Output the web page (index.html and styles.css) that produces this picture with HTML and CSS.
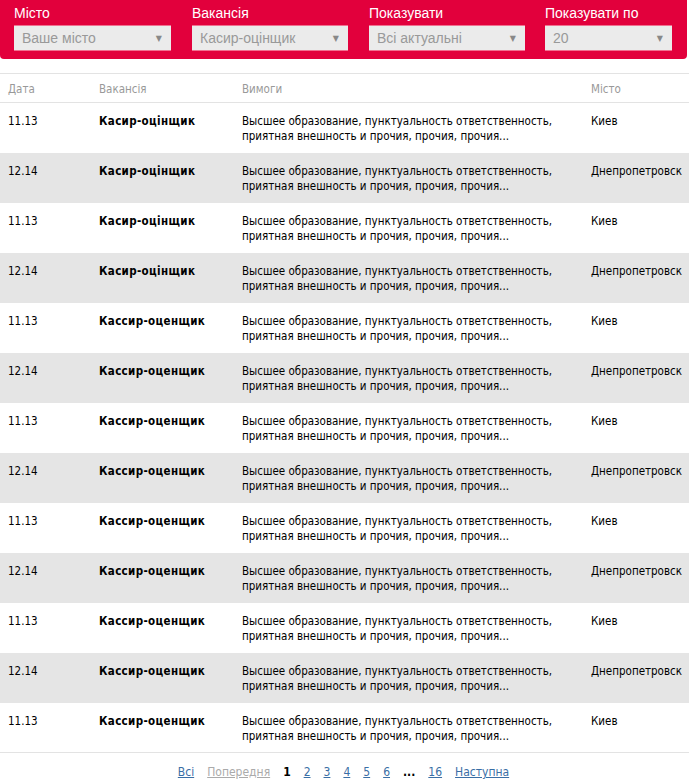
FILE: index.html
```html
<!DOCTYPE html>
<html lang="uk">
<head>
<meta charset="utf-8">
<link rel="stylesheet" href="styles.css">
</head>
<body>
<div class="filters">
  <div class="filter f1"><div class="label">Місто</div><div class="select"><span>Ваше місто</span><span class="arrow">▼</span></div></div>
  <div class="filter f2"><div class="label">Вакансія</div><div class="select"><span>Касир-оцінщик</span><span class="arrow">▼</span></div></div>
  <div class="filter f3"><div class="label">Показувати</div><div class="select"><span>Всі актуальні</span><span class="arrow">▼</span></div></div>
  <div class="filter f4"><div class="label">Показувати по</div><div class="select"><span>20</span><span class="arrow">▼</span></div></div>
</div>
<table class="jobs">
  <thead>
    <tr><th class="c-date">Дата</th><th class="c-vac">Вакансія</th><th class="c-req">Вимоги</th><th class="c-city">Місто</th></tr>
  </thead>
  <tbody>
    <tr><td>11.13</td><td class="vac">Касир-оцінщик</td><td>Высшее образование, пунктуальность ответственность,<br>приятная внешность и прочия, прочия, прочия...</td><td>Киев</td></tr>
    <tr class="alt"><td>12.14</td><td class="vac">Касир-оцінщик</td><td>Высшее образование, пунктуальность ответственность,<br>приятная внешность и прочия, прочия, прочия...</td><td>Днепропетровск</td></tr>
    <tr><td>11.13</td><td class="vac">Касир-оцінщик</td><td>Высшее образование, пунктуальность ответственность,<br>приятная внешность и прочия, прочия, прочия...</td><td>Киев</td></tr>
    <tr class="alt"><td>12.14</td><td class="vac">Касир-оцінщик</td><td>Высшее образование, пунктуальность ответственность,<br>приятная внешность и прочия, прочия, прочия...</td><td>Днепропетровск</td></tr>
    <tr><td>11.13</td><td class="vac">Кассир-оценщик</td><td>Высшее образование, пунктуальность ответственность,<br>приятная внешность и прочия, прочия, прочия...</td><td>Киев</td></tr>
    <tr class="alt"><td>12.14</td><td class="vac">Кассир-оценщик</td><td>Высшее образование, пунктуальность ответственность,<br>приятная внешность и прочия, прочия, прочия...</td><td>Днепропетровск</td></tr>
    <tr><td>11.13</td><td class="vac">Кассир-оценщик</td><td>Высшее образование, пунктуальность ответственность,<br>приятная внешность и прочия, прочия, прочия...</td><td>Киев</td></tr>
    <tr class="alt"><td>12.14</td><td class="vac">Кассир-оценщик</td><td>Высшее образование, пунктуальность ответственность,<br>приятная внешность и прочия, прочия, прочия...</td><td>Днепропетровск</td></tr>
    <tr><td>11.13</td><td class="vac">Кассир-оценщик</td><td>Высшее образование, пунктуальность ответственность,<br>приятная внешность и прочия, прочия, прочия...</td><td>Киев</td></tr>
    <tr class="alt"><td>12.14</td><td class="vac">Кассир-оценщик</td><td>Высшее образование, пунктуальность ответственность,<br>приятная внешность и прочия, прочия, прочия...</td><td>Днепропетровск</td></tr>
    <tr><td>11.13</td><td class="vac">Кассир-оценщик</td><td>Высшее образование, пунктуальность ответственность,<br>приятная внешность и прочия, прочия, прочия...</td><td>Киев</td></tr>
    <tr class="alt"><td>12.14</td><td class="vac">Кассир-оценщик</td><td>Высшее образование, пунктуальность ответственность,<br>приятная внешность и прочия, прочия, прочия...</td><td>Днепропетровск</td></tr>
    <tr><td>11.13</td><td class="vac">Кассир-оценщик</td><td>Высшее образование, пунктуальность ответственность,<br>приятная внешность и прочия, прочия, прочия...</td><td>Киев</td></tr>
  </tbody>
</table>
<div class="pager">
  <a href="#" class="link">Всі</a>
  <span class="disabled">Попередня</span>
  <span class="current">1</span>
  <a href="#" class="link">2</a>
  <a href="#" class="link">3</a>
  <a href="#" class="link">4</a>
  <a href="#" class="link">5</a>
  <a href="#" class="link">6</a>
  <span class="dots">...</span>
  <a href="#" class="link">16</a>
  <a href="#" class="link">Наступна</a>
</div>
</body>
</html>
```
FILE: styles.css
```css
html, body {
  margin: 0;
  padding: 0;
  background: #fff;
}
body {
  font-family: "DejaVu Sans Condensed", "DejaVu Sans", sans-serif;
  font-size: 11.5px;
  color: #000;
  width: 689px;
}
.filters {
  display: flex;
  background: #e2003c;
  width: 687px;
  height: 59px;
  box-sizing: border-box;
  padding: 5px 0 0 14px;
  border-radius: 0 0 4px 4px;
  font-family: "Liberation Sans", Arial, sans-serif;
}
.filter .label {
  color: #fff;
  font-size: 14px;
  line-height: 17px;
  height: 20px;
}
.f1 { width: 157px; margin-right: 21px; }
.f2 { width: 156px; margin-right: 21px; }
.f3 { width: 156px; margin-right: 20px; }
.f4 { width: 127px; }
.select {
  display: flex;
  justify-content: space-between;
  align-items: center;
  height: 24px;
  background: #ebebeb;
  border-top: 1px solid #f07090;
  border-bottom: 1px solid #f07090;
  color: #999;
  font-size: 14px;
  padding: 0 9px 0 8px;
}
.arrow {
  font-size: 8px;
  color: #888;
  font-family: "DejaVu Sans", sans-serif;
}
.jobs {
  margin-top: 14px;
  width: 689px;
  border-collapse: collapse;
  border-top: 1px solid #e3e3e3;
}
.jobs th {
  text-align: left;
  font-weight: normal;
  color: #999;
  height: 26px;
  padding: 2px 0 0 0;
  border-bottom: 1px solid #e3e3e3;
  vertical-align: middle;
}
.jobs td {
  height: 50px;
  padding: 11px 0 0 0;
  vertical-align: top;
  line-height: 15px;
  box-sizing: border-box;
}
.jobs tbody tr:last-child td { border-bottom: 1px solid #e3e3e3; }
.c-date { width: 91px; padding-left: 8px !important; }
.jobs td:first-child { padding-left: 8px; }
.c-vac { width: 143px; }
.c-req { width: 349px; }
.jobs .alt td { background: #e5e5e5; }
.vac { font-weight: bold; letter-spacing: 0.35px; }
.pager {
  display: flex;
  justify-content: center;
  align-items: baseline;
  gap: 13px;
  padding-top: 12px;
  padding-right: 2px;
  font-size: 12px;
}
.pager .link { color: #3a6ea5; text-decoration: underline; }
.pager .disabled { color: #aaa; text-decoration: underline; }
.pager .current { font-weight: bold; color: #000; }
.pager .dots { font-weight: bold; }
```
